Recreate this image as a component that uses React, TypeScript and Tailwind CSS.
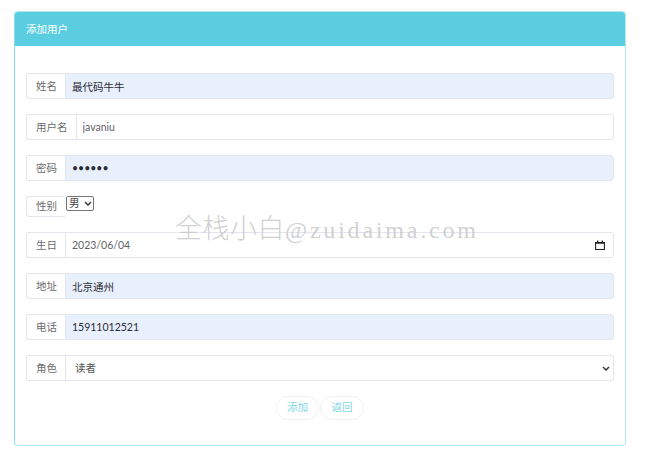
function Label({ children }: { children: string }) {
  return (
    <span className="flex h-full shrink-0 items-center rounded-l-[3px] border border-r-0 border-[#e3e6ef] bg-white pl-[9px] pr-[8px] pt-[1px] text-[10.5px] text-[#6b6b6b]">
      {children}
    </span>
  );
}

function Chevron({ className }: { className: string }) {
  return (
    <svg viewBox="0 0 8 5" className={`pointer-events-none absolute h-[5px] w-[8px] ${className}`}>
      <path d="M1 1l3 3 3-3" fill="none" stroke="#3c4043" strokeWidth="1.6" />
    </svg>
  );
}

function Row({ label, value, filled, type = "text", children }: { label: string; value: string; filled?: boolean; type?: string; children?: React.ReactNode }) {
  return (
    <div className="relative flex h-[26px] items-stretch">
      <Label>{label}</Label>
      <input
        readOnly
        type={type}
        defaultValue={value}
        className={`h-full min-w-0 flex-1 rounded-r-[3px] border border-[#e3e6ef] px-[6px] text-[10.5px] outline-none ${
          filled ? "bg-[#e8f0fe] text-[#2b2b33]" : "bg-white text-[#5f6368]"
        }`}
      />
      {children}
    </div>
  );
}

export default function App() {
  return (
    <div className="relative h-[476px] w-[650px] overflow-hidden bg-white pl-[14px] pt-[11px] font-['Lato','Noto_Sans_CJK_SC',sans-serif]">
      <div className="h-[435px] w-[612px] rounded-[4px] border border-[#b5e8f1] border-l-[#85dfee]">
        {/* header */}
        <div className="flex h-[34px] items-center rounded-t-[3px] bg-[#5bcde0] px-[11px] pt-[1px] text-[10.5px] text-white">添加用户</div>

        <form className="flex flex-col gap-[15px] px-[11px] pt-[27px]">
          <Row label="姓名" value="最代码牛牛" filled />
          <Row label="用户名" value="javaniu" />
          <Row label="密码" value="123456" type="password" filled />

          <div className="flex h-[21px] items-start">
            <Label>性别</Label>
            <div className="relative ml-[1px]">
              <select className="block h-[15px] w-[28px] appearance-none rounded-[2px] border border-[#767676] bg-white pl-[2px] text-[10.5px] leading-[13px] text-[#444]">
                <option>男</option>
              </select>
              <Chevron className="left-[18px] top-[5px]" />
            </div>
          </div>

          <Row label="生日" value="2023/06/04">
            <svg viewBox="0 0 10 10" className="pointer-events-none absolute right-[9px] top-[8px] h-[10px] w-[10px]">
              <path d="M.6 2.5h8.8v7h-8.8z" fill="none" stroke="#222" strokeWidth="1.1" />
              <path d="M.5 2h9v1.8h-9zM2 .5h1.4v2h-1.4zM6.6 .5h1.4v2h-1.4z" fill="#222" />
            </svg>
          </Row>
          <Row label="地址" value="北京通州" filled />
          <Row label="电话" value="15911012521" filled />

          <div className="relative flex h-[26px] items-stretch">
            <Label>角色</Label>
            <select className="h-full min-w-0 flex-1 appearance-none rounded-r-[3px] border border-[#e3e6ef] bg-white pl-[9px] pt-[1px] text-[10.5px] text-[#555]">
              <option>读者</option>
            </select>
            <Chevron className="right-[4px] top-[11px]" />
          </div>

          <div className="flex justify-center gap-[1px]">
            <button type="button" className="h-[24px] w-[43px] rounded-full border border-[#f0f1f4] bg-white text-[10.5px] text-[#7fd6e6]">添加</button>
            <button type="button" className="h-[24px] w-[44px] rounded-full border border-[#f0f1f4] bg-white text-[10.5px] text-[#7fd6e6]">返回</button>
          </div>
        </form>
      </div>

      {/* watermark */}
      <div className="pointer-events-none absolute left-[175px] top-[210px] flex items-baseline whitespace-nowrap text-[#c8c8c8]/85">
        <span className="font-['Noto_Sans_CJK_SC',serif] text-[27px] font-extralight leading-[34px] tracking-[0.5px]">全栈小白</span>
        <span className="font-['Liberation_Serif',serif] text-[24px] leading-[34px] tracking-[2.8px]">@zuidaima.com</span>
      </div>
    </div>
  );
}
